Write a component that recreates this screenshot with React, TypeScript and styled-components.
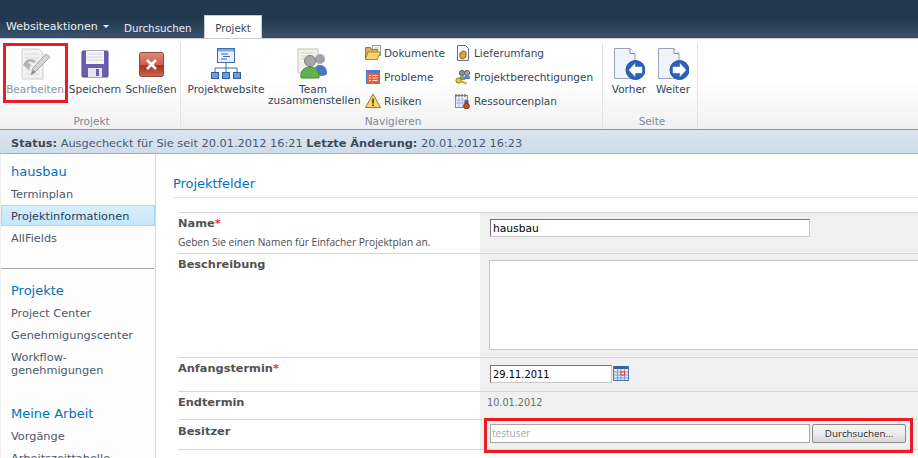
import styled, { createGlobalStyle } from 'styled-components';

const GlobalStyle = createGlobalStyle`
  html, body {
    margin: 0;
    padding: 0;
    background: #fff;
  }
  body {
    font-family: "DejaVu Sans", Verdana, sans-serif;
    font-size: 11px;
    color: #3b4f65;
  }
`;

function EditIcon() {
  return (
    <svg width="32" height="32" viewBox="0 0 32 32">
      <path d="M3 1h17l4 4v26H3z" fill="#f2f2f2" stroke="#cfcfcf" />
      <path d="M6 6h14M6 10h15M6 14h15M6 18h15M6 22h15M6 26h15" stroke="#dcdcdc" />
      <path d="M6 14c2-4 9-4 11 0l-3 1c-1-2-4-2-5 0l3 1-2 6-6-5z" fill="#b4b4b4" />
      <path d="M12 27l2-7L27 6l4 3-14 14z" fill="#d6d6d6" stroke="#a8a8a8" />
      <path d="M12 27l2-5 3 2z" fill="#8f8f8f" />
    </svg>
  );
}

function SaveIcon() {
  return (
    <svg width="28" height="28" viewBox="0 0 28 28">
      <rect x="1" y="1" width="26" height="26" rx="1" fill="#6a5fae" stroke="#544a93" />
      <rect x="5" y="1" width="18" height="13" fill="#f7f7f7" />
      <path d="M6 4h16M6 7h16M6 10h16" stroke="#d2d2dc" />
      <rect x="7" y="18" width="14" height="9" fill="#e4e4ea" />
      <rect x="15" y="19" width="3" height="7" fill="#6a5fae" />
    </svg>
  );
}

function CloseIcon() {
  return (
    <svg width="25" height="25" viewBox="0 0 25 25">
      <defs>
        <linearGradient id="closeFill" x1="0" y1="0" x2="0" y2="1">
          <stop offset="0" stopColor="#e08a78" />
          <stop offset="0.5" stopColor="#d0604c" />
          <stop offset="0.55" stopColor="#a82c1c" />
          <stop offset="1" stopColor="#cc6a58" />
        </linearGradient>
      </defs>
      <rect x="0.5" y="0.5" width="24" height="24" rx="2" fill="url(#closeFill)" stroke="#8a4a3c" />
      <path d="M8 8l9 9M17 8l-9 9" stroke="#fff" strokeWidth="2.6" />
    </svg>
  );
}

function SiteIcon() {
  return (
    <svg width="32" height="32" viewBox="0 0 32 32">
      <rect x="7.5" y="0.5" width="17" height="14" fill="#e8f0fa" stroke="#3a6cb4" />
      <rect x="8" y="1" width="16" height="2.5" fill="#7fa6da" />
      <path d="M11 6h7M13 8.5h7M11 11h6" stroke="#3a6cb4" />
      <path d="M16 15v5M5 25v-5h22v5M16 20v5" stroke="#3a6cb4" fill="none" />
      <rect x="1.5" y="24.5" width="7" height="6" fill="#6d9ddc" stroke="#2c5ea8" />
      <rect x="12.5" y="24.5" width="7" height="6" fill="#6d9ddc" stroke="#2c5ea8" />
      <rect x="23.5" y="24.5" width="7" height="6" fill="#6d9ddc" stroke="#2c5ea8" />
    </svg>
  );
}

function TeamIcon() {
  return (
    <svg width="32" height="32" viewBox="0 0 32 32">
      <rect x="1" y="1" width="20" height="24" fill="#f3f3ee" stroke="#c4c4bc" />
      <path d="M4 5h14M4 8h14M4 11h14" stroke="#cfcfc6" />
      <circle cx="23" cy="11" r="5" fill="#9fa3ac" />
      <path d="M17 25c0-6 3-8 6-8s7 2 7 8c0 2-3 3-6 3z" fill="#4a76c6" />
      <circle cx="13" cy="13" r="5.5" fill="#a6a6a2" stroke="#7f7f7f" />
      <path d="M4 30c-1-7 3-11 9-11s10 4 9 11z" fill="#62b050" stroke="#44893a" />
    </svg>
  );
}

function FolderIcon() {
  return (
    <svg width="16" height="16" viewBox="0 0 16 16">
      <rect x="7.5" y="0.5" width="8" height="10" fill="#fff" stroke="#9a9a9a" />
      <path d="M9 3h5M9 5h5M9 7h5" stroke="#c4c4c4" />
      <path d="M0.5 2.5h5l1 2h6v10H0.5z" fill="#d2b060" stroke="#8f7a4a" />
      <path d="M3 7h12.5l-3 7.5H0.5z" fill="#f8d468" stroke="#a88a3c" />
    </svg>
  );
}

function IssueIcon() {
  return (
    <svg width="16" height="16" viewBox="0 0 16 16">
      <rect x="1.5" y="1.5" width="13" height="13" fill="#e8603c" stroke="#5a7cc0" />
      <rect x="1.5" y="1.5" width="13" height="2.5" fill="#4a7ccc" />
      <path d="M4 6.5h2M7.5 6.5h5M4 9h2M7.5 9h5M4 11.5h2M7.5 11.5h5" stroke="#fde4d8" />
    </svg>
  );
}

function WarningIcon() {
  return (
    <svg width="16" height="16" viewBox="0 0 16 16">
      <path d="M8 1L15.5 14.5H.5z" fill="#fcd95c" stroke="#8a7a44" strokeLinejoin="round" />
      <path d="M8 5.5v5" stroke="#333" strokeWidth="1.6" />
      <path d="M8 11.5v1.6" stroke="#333" strokeWidth="1.6" />
    </svg>
  );
}

function ScopeIcon() {
  return (
    <svg width="16" height="16" viewBox="0 0 16 16">
      <path d="M2.5 .5h8l3 3v12h-11z" fill="#f7f9fc" stroke="#5d6f93" />
      <path d="M5 8l3-2 3 1v5l-3 2-3-1z" fill="#d9a83a" stroke="#8a6a1c" />
    </svg>
  );
}

function PermissionIcon() {
  return (
    <svg width="16" height="16" viewBox="0 0 16 16">
      <circle cx="7" cy="4" r="2.6" fill="#8c8f96" stroke="#5a5c60" />
      <circle cx="12" cy="4" r="2.6" fill="#a2a6ae" stroke="#5a5c60" />
      <path d="M4 11c0-3 1-4 3-4s3 1 3 4z" fill="#68a860" />
      <path d="M9 10c0-3 1-4 3-4s3 1 3 4z" fill="#5680c4" />
      <circle cx="3.5" cy="11.5" r="2.6" fill="#f0c040" stroke="#9a7a20" />
      <path d="M5.5 12l6 2.5" stroke="#d8a428" strokeWidth="2" />
    </svg>
  );
}

function PlanIcon() {
  return (
    <svg width="16" height="16" viewBox="0 0 16 16">
      <rect x="0.5" y="2.5" width="12" height="12" fill="#e8eef8" stroke="#808ca4" />
      <path d="M1 1v3M4 1v3M7 1v3M10 1v3" stroke="#555" />
      <path d="M1 7h11M1 10h11M4 5v9M7.5 5v9" stroke="#aab6cc" />
      <circle cx="11.5" cy="9" r="2.3" fill="#666" />
      <circle cx="11.5" cy="13" r="2.8" fill="#c8542c" stroke="#7a3018" />
    </svg>
  );
}

function PageArrowIcon({ dir }: { dir: 'left' | 'right' }) {
  const arrow =
    dir === 'left'
      ? 'M16 22l6-6.5v3.5h7v6h-7v3.5z'
      : 'M29 22l-6-6.5v3.5h-7v6h7v3.5z';
  return (
    <svg width="32" height="32" viewBox="0 0 32 32">
      <path d="M1.5 .5H17l5 5v25H1.5z" fill="#f0f3f9" stroke="#98a4bc" />
      <path d="M17 .5v5h5" fill="#fff" stroke="#7f8ca8" />
      <circle cx="22.5" cy="22" r="9.5" fill="#2a62bc" stroke="#2050a0" />
      <path d={arrow} fill="#fff" stroke="#dce8f8" strokeWidth="0.5" />
    </svg>
  );
}

function CalendarIcon() {
  return (
    <svg width="16" height="16" viewBox="0 0 16 16">
      <rect x="0.5" y="1.5" width="15" height="14" fill="#dfe9f8" stroke="#4f77b4" />
      <rect x="1" y="1" width="14" height="3" fill="#44608c" />
      <path d="M1 7h14M1 10h14M1 13h14M4.5 4v11M8 4v11M11.5 4v11" stroke="#7fa0d4" />
      <rect x="8" y="7" width="3.5" height="3" fill="#fff" stroke="#e03020" />
    </svg>
  );
}

export default function App() {
  return (
    <>
      <GlobalStyle />
      <Page>
        <TopBar>
          <SiteActions>
            Websiteaktionen <Caret />
          </SiteActions>
          <TabLink>Durchsuchen</TabLink>
          <ActiveTab>Projekt</ActiveTab>
        </TopBar>

        <Ribbon>
          <Group $width={181}>
            <GroupBody>
              <LargeButton $width={64} $disabled>
                <IconSlot><EditIcon /></IconSlot>
                Bearbeiten
              </LargeButton>
              <LargeButton $width={56}>
                <IconSlot><SaveIcon /></IconSlot>
                Speichern
              </LargeButton>
              <LargeButton $width={56}>
                <IconSlot><CloseIcon /></IconSlot>
                Schließen
              </LargeButton>
            </GroupBody>
            <GroupLabel>Projekt</GroupLabel>
          </Group>

          <Group $width={422}>
            <GroupBody>
              <LargeButton $width={84}>
                <IconSlot><SiteIcon /></IconSlot>
                Projektwebsite
              </LargeButton>
              <LargeButton $width={90}>
                <IconSlot><TeamIcon /></IconSlot>
                Team zusammenstellen
              </LargeButton>
              <SmallColumn $width={90}>
                <SmallButton><FolderIcon />Dokumente</SmallButton>
                <SmallButton><IssueIcon />Probleme</SmallButton>
                <SmallButton><WarningIcon />Risiken</SmallButton>
              </SmallColumn>
              <SmallColumn $width={150}>
                <SmallButton><ScopeIcon />Lieferumfang</SmallButton>
                <SmallButton><PermissionIcon />Projektberechtigungen</SmallButton>
                <SmallButton><PlanIcon />Ressourcenplan</SmallButton>
              </SmallColumn>
            </GroupBody>
            <GroupLabel>Navigieren</GroupLabel>
          </Group>

          <Group $width={95} $pad={4}>
            <GroupBody>
              <LargeButton $width={44}>
                <IconSlot><PageArrowIcon dir="left" /></IconSlot>
                Vorher
              </LargeButton>
              <LargeButton $width={44}>
                <IconSlot><PageArrowIcon dir="right" /></IconSlot>
                Weiter
              </LargeButton>
            </GroupBody>
            <GroupLabel>Seite</GroupLabel>
          </Group>
        </Ribbon>

        <StatusBar>
          <b>Status:</b> Ausgecheckt für Sie seit 20.01.2012 16:21 <b>Letzte Änderung:</b> 20.01.2012 16:23
        </StatusBar>

        <Main>
          <Nav>
            <NavHeading>hausbau</NavHeading>
            <NavItem>Terminplan</NavItem>
            <NavItem $selected>Projektinformationen</NavItem>
            <NavItem>AllFields</NavItem>
            <NavDivider />
            <NavHeading>Projekte</NavHeading>
            <NavItem>Project Center</NavItem>
            <NavItem>Genehmigungscenter</NavItem>
            <NavItem>Workflow-<br />genehmigungen</NavItem>
            <NavHeading $spaced>Meine Arbeit</NavHeading>
            <NavItem>Vorgänge</NavItem>
            <NavItem>Arbeitszeittabelle</NavItem>
          </Nav>

          <Content>
            <SectionTitle>Projektfelder</SectionTitle>
            <Form>
              <FormRow $height={41}>
                <LabelCell>
                  <FieldLabel>Name<Required>*</Required></FieldLabel>
                  <FieldHint>Geben Sie einen Namen für Einfacher Projektplan an.</FieldHint>
                </LabelCell>
                <ValueCell $top={6}>
                  <TextInput defaultValue="hausbau" />
                </ValueCell>
              </FormRow>
              <FormRow $height={104}>
                <LabelCell>
                  <FieldLabel>Beschreibung</FieldLabel>
                </LabelCell>
                <ValueCell>
                  <TextArea />
                </ValueCell>
              </FormRow>
              <FormRow $height={34}>
                <LabelCell>
                  <FieldLabel>Anfangstermin<Required>*</Required></FieldLabel>
                </LabelCell>
                <ValueCell>
                  <DateRow>
                    <DateInput defaultValue="29.11.2011" />
                    <CalendarIcon />
                  </DateRow>
                </ValueCell>
              </FormRow>
              <FormRow $height={28}>
                <LabelCell>
                  <FieldLabel>Endtermin</FieldLabel>
                </LabelCell>
                <ValueCell $top={4}>
                  <ReadOnlyValue>10.01.2012</ReadOnlyValue>
                </ValueCell>
              </FormRow>
              <FormRow $height={30}>
                <LabelCell $top={4}>
                  <FieldLabel>Besitzer</FieldLabel>
                </LabelCell>
                <ValueCell $top={4}>
                  <OwnerRow>
                    <OwnerInput>testuser</OwnerInput>
                    <BrowseButton>Durchsuchen...</BrowseButton>
                  </OwnerRow>
                </ValueCell>
              </FormRow>
            </Form>
          </Content>
        </Main>

        <Highlight $left={3} $top={43} $width={65} $height={60} />
        <Highlight $left={484} $top={418} $width={429} $height={35} />
      </Page>
    </>
  );
}

const Page = styled.div`
  position: relative;
  width: 918px;
  height: 458px;
  overflow: hidden;
`;

const TopBar = styled.div`
  display: flex;
  align-items: flex-end;
  height: 38px;
  padding-left: 6px;
  background: linear-gradient(#21384e 0, #21384e 50%, #3b536c 100%);
`;

const SiteActions = styled.div`
  display: flex;
  align-items: center;
  gap: 5px;
  height: 14px;
  margin-bottom: 5px;
  width: 118px;
  color: #e8eef4;
`;

const Caret = styled.span`
  width: 0;
  height: 0;
  border-left: 3px solid transparent;
  border-right: 3px solid transparent;
  border-top: 3px solid #e8eef4;
`;

const TabLink = styled.div`
  width: 80px;
  height: 14px;
  margin-bottom: 2px;
  font-size: 10.3px;
  color: #e8eef4;
`;

const ActiveTab = styled.div`
  width: 58px;
  height: 23px;
  line-height: 25px;
  box-sizing: border-box;
  text-align: center;
  font-size: 10.3px;
  background: #fff;
  border: 1px solid #c6ccd2;
  border-bottom: none;
  color: #33465a;
`;

const Ribbon = styled.div`
  display: flex;
  height: 92px;
  box-sizing: border-box;
  border-top: 1px solid #c8ced4;
  border-bottom: 1px solid #8f959b;
  font-size: 10.5px;
  background: linear-gradient(#fff 0, #fff 45%, #f1f1f1 100%);
`;

const Group = styled.div<{ $width: number; $pad?: number }>`
  display: flex;
  flex-direction: column;
  width: ${(p) => p.$width}px;
  box-sizing: border-box;
  margin-top: 4px;
  padding-left: ${(p) => p.$pad ?? 3}px;
  border-right: 1px solid #e3e3e3;
`;

const GroupBody = styled.div`
  display: flex;
  flex: 1;
`;

const GroupLabel = styled.div`
  text-align: center;
  height: 16px;
  line-height: 16px;
  color: #7d8898;
`;

const LargeButton = styled.div<{ $width: number; $disabled?: boolean }>`
  width: ${(p) => p.$width}px;
  text-align: center;
  line-height: 11px;
  color: ${(p) => (p.$disabled ? '#8a94a4' : '#33465a')};
`;

const IconSlot = styled.div`
  display: flex;
  justify-content: center;
  align-items: center;
  height: 34px;
  margin-top: 4px;
  margin-bottom: 3px;
`;

const SmallColumn = styled.div<{ $width: number }>`
  display: flex;
  flex-direction: column;
  gap: 8px;
  width: ${(p) => p.$width}px;
  padding-top: 2px;
  margin-left: 7px;
  margin-right: -7px;
`;

const SmallButton = styled.div`
  display: flex;
  align-items: center;
  gap: 3px;
  height: 16px;
  white-space: nowrap;
  color: #33465a;
`;

const StatusBar = styled.div`
  height: 24px;
  line-height: 26px;
  padding-left: 11px;
  box-sizing: border-box;
  font-size: 11.35px;
  background: linear-gradient(#dbe5f1, #cfdcea);
  border-bottom: 1px solid #a8b0bc;
  color: #4a5a6e;
  b {
    color: #3f4a58;
  }
`;

const Main = styled.div`
  display: flex;
`;

const Nav = styled.nav`
  width: 156px;
  height: 304px;
  flex-shrink: 0;
  box-sizing: border-box;
  padding-top: 10px;
  font-size: 11.3px;
  background: #fdfdfd;
  border-right: 1px solid #d8d8d8;
  border-left: 1px solid #f0f0f0;
`;

const NavHeading = styled.div<{ $spaced?: boolean }>`
  padding-left: 10px;
  height: 16px;
  line-height: 16px;
  margin-top: ${(p) => (p.$spaced ? '26px' : '0')};
  margin-bottom: 4px;
  font-size: 13px;
  color: #0072bc;
`;

const NavItem = styled.div<{ $selected?: boolean }>`
  padding: 4px 10px 3px;
  line-height: 13px;
  margin-bottom: 2px;
  color: #4c5a6c;
  ${(p) =>
    p.$selected
      ? `
    color: #2c4058;
    background: linear-gradient(#d8effc, #c4e6fb);
    outline: 1px solid #a8d6f4;
    outline-offset: -1px;
    padding: 5px 10px 3px;
    margin-top: -1px;
  `
      : ''}
`;

const NavDivider = styled.div`
  height: 1px;
  margin: 20px 1px 14px 0;
  background: #a9a9a9;
`;

const Content = styled.main`
  flex: 1;
  padding: 22px 0 0 17px;
`;

const SectionTitle = styled.h2`
  margin: 0;
  height: 21px;
  line-height: 15px;
  font-size: 12.9px;
  font-weight: normal;
  color: #0072bc;
  border-bottom: 1px solid #e4e4e4;
`;

const Form = styled.div`
  margin: 14px 0 0 5px;
  border-bottom: 1px solid #d6d6d6;
`;

const FormRow = styled.div<{ $height: number }>`
  display: grid;
  grid-template-columns: 302px 1fr;
  height: ${(p) => p.$height}px;
  box-sizing: border-box;
  border-top: 1px solid #d6d6d6;
`;

const LabelCell = styled.div<{ $top?: number }>`
  padding-top: ${(p) => p.$top ?? 3}px;
  white-space: nowrap;
`;

const FieldLabel = styled.div`
  font-weight: bold;
  font-size: 11.35px;
  color: #525252;
  line-height: 14px;
`;

const Required = styled.span`
  color: #ff3030;
`;

const FieldHint = styled.div`
  font-family: "Open Sans", Tahoma, sans-serif;
  font-size: 10.2px;
  line-height: 14px;
  margin-top: 5px;
  color: #4c4c4c;
`;

const ValueCell = styled.div<{ $top?: number }>`
  background: #f0f0f0;
  padding: ${(p) => p.$top ?? 5}px 0 0 10px;
`;

const TextInput = styled.input`
  display: block;
  width: 320px;
  height: 18px;
  box-sizing: border-box;
  padding: 0 2px;
  font: 10.7px "DejaVu Sans", Verdana, sans-serif;
  color: #000;
  border: 1px solid #c8c8c8;
  border-top-color: #767676;
  border-left-color: #767676;
  background: #fff;
  outline: none;
`;

const TextArea = styled.textarea`
  display: block;
  width: 430px;
  height: 90px;
  box-sizing: border-box;
  padding: 0;
  resize: none;
  border: 1px solid #c8c8c8;
  background: #fff;
  outline: none;
  margin-left: -1px;
  margin-top: 1px;
`;

const DateRow = styled.div`
  display: flex;
  align-items: flex-start;
  gap: 1px;
  padding-top: 2px;
`;

const DateInput = styled(TextInput)`
  width: 122px;
  font-size: 9.9px;
`;

const ReadOnlyValue = styled.div`
  color: #6e6e6e;
  line-height: 14px;
  font-size: 9.7px;
  margin-left: -3px;
`;

const OwnerRow = styled.div`
  display: flex;
  gap: 2px;
`;

const OwnerInput = styled.div`
  width: 320px;
  height: 19px;
  box-sizing: border-box;
  line-height: 17px;
  padding-left: 1px;
  font-family: "Open Sans", Tahoma, sans-serif;
  font-size: 10px;
  color: #a6a6a6;
  background: #fff;
  border: 1px solid #a8a8a8;
`;

const BrowseButton = styled.button`
  width: 94px;
  height: 19px;
  padding: 0;
  font: 9.8px "Open Sans", Tahoma, sans-serif;
  color: #2a2a2a;
  border: 1px solid #8a8a8a;
  border-radius: 2px;
  background: linear-gradient(#f4f4f4 0, #ececec 50%, #d8d8d8 100%);
`;

const Highlight = styled.div<{ $left: number; $top: number; $width: number; $height: number }>`
  position: absolute;
  left: ${(p) => p.$left}px;
  top: ${(p) => p.$top}px;
  width: ${(p) => p.$width}px;
  height: ${(p) => p.$height}px;
  box-sizing: border-box;
  border: 3px solid #ed1c24;
  pointer-events: none;
`;
